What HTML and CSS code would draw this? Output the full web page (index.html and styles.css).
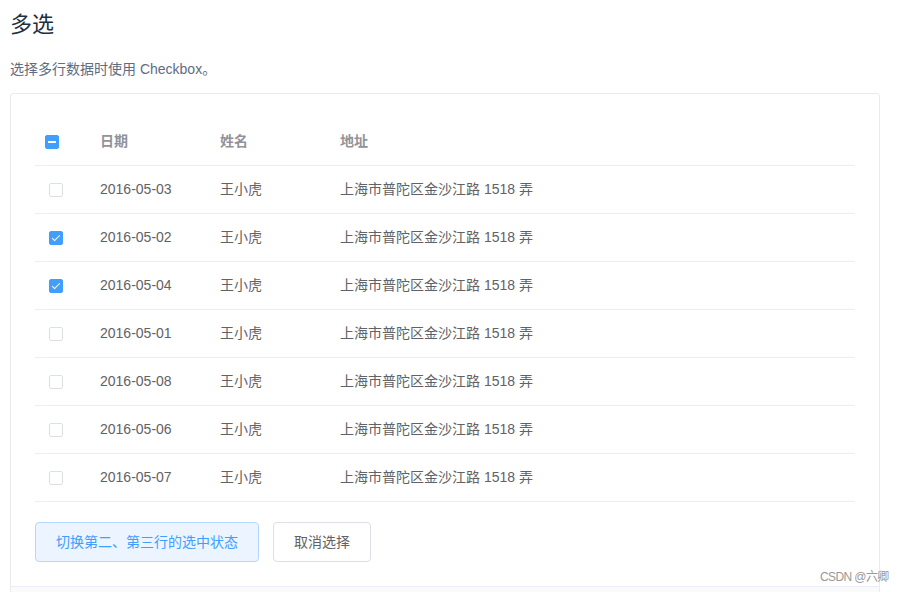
FILE: index.html
```html
<!DOCTYPE html>
<html lang="zh">
<head>
<meta charset="utf-8">
<link rel="stylesheet" href="styles.css">
</head>
<body>
<div class="page">
  <h3 class="title">多选</h3>
  <p class="desc">选择多行数据时使用 Checkbox。</p>
  <div class="demo">
    <div class="source">
      <table class="table">
        <colgroup><col class="c-sel"><col class="c-date"><col class="c-name"><col></colgroup>
        <thead>
          <tr>
            <th><div class="cell sel-head"><span class="cb cb-on"><span class="bar"></span></span></div></th>
            <th><div class="cell">日期</div></th>
            <th><div class="cell">姓名</div></th>
            <th><div class="cell">地址</div></th>
          </tr>
        </thead>
        <tbody>
          <tr><td><div class="cell sel"><span class="cb"></span></div></td><td><div class="cell">2016-05-03</div></td><td><div class="cell">王小虎</div></td><td><div class="cell">上海市普陀区金沙江路 1518 弄</div></td></tr>
          <tr><td><div class="cell sel"><span class="cb cb-on"><span class="tick"></span></span></div></td><td><div class="cell">2016-05-02</div></td><td><div class="cell">王小虎</div></td><td><div class="cell">上海市普陀区金沙江路 1518 弄</div></td></tr>
          <tr><td><div class="cell sel"><span class="cb cb-on"><span class="tick"></span></span></div></td><td><div class="cell">2016-05-04</div></td><td><div class="cell">王小虎</div></td><td><div class="cell">上海市普陀区金沙江路 1518 弄</div></td></tr>
          <tr><td><div class="cell sel"><span class="cb"></span></div></td><td><div class="cell">2016-05-01</div></td><td><div class="cell">王小虎</div></td><td><div class="cell">上海市普陀区金沙江路 1518 弄</div></td></tr>
          <tr><td><div class="cell sel"><span class="cb"></span></div></td><td><div class="cell">2016-05-08</div></td><td><div class="cell">王小虎</div></td><td><div class="cell">上海市普陀区金沙江路 1518 弄</div></td></tr>
          <tr><td><div class="cell sel"><span class="cb"></span></div></td><td><div class="cell">2016-05-06</div></td><td><div class="cell">王小虎</div></td><td><div class="cell">上海市普陀区金沙江路 1518 弄</div></td></tr>
          <tr><td><div class="cell sel"><span class="cb"></span></div></td><td><div class="cell">2016-05-07</div></td><td><div class="cell">王小虎</div></td><td><div class="cell">上海市普陀区金沙江路 1518 弄</div></td></tr>
        </tbody>
      </table>
      <div class="actions">
        <button class="btn btn-primary-plain">切换第二、第三行的选中状态</button>
        <button class="btn">取消选择</button>
      </div>
    </div>
    <div class="meta"></div>
  </div>
</div>
<div class="watermark">CSDN @六卿</div>
</body>
</html>
```

FILE: styles.css
```css
html, body {
  margin: 0;
  padding: 0;
  background: #fff;
  overflow: hidden;
}
body {
  font-family: "Liberation Sans", Arial, "Noto Sans CJK SC", sans-serif;
  -webkit-font-smoothing: antialiased;
}
.page {
  width: 870px;
  margin-left: 10px;
}
.title {
  margin: 0;
  padding-top: 10px;
  font-size: 22px;
  font-weight: 400;
  line-height: 30px;
  color: #1f2f3d;
}
.desc {
  margin: 14px 0 0;
  font-size: 14px;
  line-height: 30px;
  color: #5e6d82;
}
.demo {
  margin-top: 9px;
  border: 1px solid #ebebeb;
  border-radius: 3px;
}
.source {
  padding: 24px 24px 24px;
}
.table {
  width: 100%;
  border-collapse: collapse;
  table-layout: fixed;
  font-size: 14px;
  color: #606266;
}
.c-sel { width: 55px; }
.c-date { width: 120px; }
.c-name { width: 120px; }
.table th, .table td {
  padding: 12px 0;
  border-bottom: 1px solid #ebeef5;
  text-align: left;
  vertical-align: middle;
}
.table th {
  color: #909399;
  font-weight: 700;
}
.cell {
  line-height: 23px;
  padding-left: 10px;
  white-space: nowrap;
}
.sel-head, .sel {
  display: flex;
  align-items: center;
  height: 23px;
}
.sel { padding-left: 14px; }
.cb {
  position: relative;
  display: inline-block;
  box-sizing: border-box;
  width: 14px;
  height: 14px;
  border: 1px solid #dcdfe6;
  border-radius: 2px;
  background: #fff;
}
.cb-on {
  background: #409eff;
  border-color: #409eff;
}
.bar {
  position: absolute;
  left: 2px;
  right: 2px;
  top: 5px;
  height: 2px;
  background: #fff;
}
.tick {
  position: absolute;
  left: 4px;
  top: 1px;
  width: 3px;
  height: 7px;
  border: 1px solid #fff;
  border-left: 0;
  border-top: 0;
  transform: rotate(45deg);
}
.actions {
  display: flex;
  gap: 14px;
  margin-top: 20px;
}
.btn {
  font-family: inherit;
  font-size: 14px;
  line-height: 14px;
  padding: 12px 20px;
  border: 1px solid #dcdfe6;
  border-radius: 4px;
  background: #fff;
  color: #606266;
  cursor: pointer;
}
.btn-primary-plain {
  background: #ecf5ff;
  border-color: #b3d8ff;
  color: #409eff;
}
.meta {
  border-top: 1px solid #eaeefb;
  background: #fafafa;
  height: 20px;
}
.watermark {
  position: absolute;
  left: 820px;
  top: 569px;
  font-size: 12px;
  line-height: 16px;
  letter-spacing: -0.6px;
  color: #999;
}
```
